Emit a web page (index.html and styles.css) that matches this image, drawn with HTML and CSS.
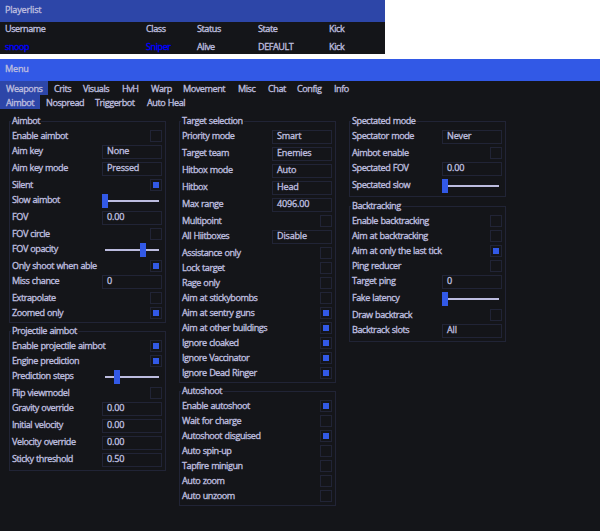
FILE: index.html
```
<!DOCTYPE html>
<html lang="en">
<head>
<meta charset="utf-8">
<title>Menu</title>
<link rel="stylesheet" href="styles.css">
</head>
<body>
<section class="players">
  <header class="titlebar muted">Playerlist</header>
  <div class="player-row"><span>Username</span><span>Class</span><span>Status</span><span>State</span><span>Kick</span></div>
  <div class="player-row"><span class="team">snoop</span><span class="team">Sniper</span><span>Alive</span><span>DEFAULT</span><span>Kick</span></div>
</section>
<main class="menu">
  <header class="titlebar">Menu</header>
  <nav class="tabs main-tabs"><span class="active">Weapons</span><span>Crits</span><span>Visuals</span><span>HvH</span><span>Warp</span><span>Movement</span><span>Misc</span><span>Chat</span><span>Config</span><span>Info</span></nav>
  <nav class="tabs sub-tabs"><span class="active">Aimbot</span><span>Nospread</span><span>Triggerbot</span><span>Auto Heal</span></nav>
  <div class="columns" id="columns"></div>
</main>
<script src="menu.js"></script>
</body>
</html>
```
FILE: styles.css
```
* { box-sizing: border-box; }
body {
  margin: 0;
  width: 600px;
  height: 531px;
  overflow: hidden;
  background: #fff;
  color: #bcbcdf;
  font: 500 9.1px/12px "Open Sans", "Noto Sans", sans-serif;
  letter-spacing: -0.44px;
  word-spacing: 0.5px;
  -webkit-text-stroke: 0.35px currentColor;
  white-space: nowrap;
}
.players { width: 385px; height: 54px; background: #141519; }
.titlebar { height: 22px; padding: 4px 5px; background: #3259e6; letter-spacing: -0.2px; }
.titlebar.muted { background: #2d46a8; }
.player-row {
  display: grid;
  grid-template-columns: 141px 51px 61px 71px 1fr;
  height: 18px;
  padding: 1px 0 0 5px;
}
.team { color: #0000ff; }
.menu { height: 472px; margin-top: 5px; background: #141519; }
.tabs { display: grid; height: 14px; }
.main-tabs { grid-template-columns: 48px 29px 39px 29px 32px 55px 30px 29px 37px 28px; }
.sub-tabs { grid-template-columns: 40px 49px 52px 50px; }
.tabs span { padding: 2px 0 0 6px; }
.tabs .active { background: #2d46a8; }
.columns {
  display: grid;
  grid-template-columns: repeat(3, 157px);
  gap: 13px;
  align-items: start;
  padding: 12px 9px 0;
}
.column { display: grid; gap: 8px; }
.column:last-child { gap: 9px; }
.group {
  display: grid;
  gap: 3px;
  padding: 0 3px 3px 2px;
  border: 1px solid #212436;
}
.legend {
  justify-self: start;
  height: 12px;
  margin: -7px 0 0 -1px;
  padding: 0 1px;
  background: #141519;
}
.row { display: flex; justify-content: space-between; }
.label { height: 12px; }
.check { width: 12px; height: 12px; padding: 2px; border: 1px solid #212436; }
.check.on::before { content: ""; display: block; width: 6px; height: 6px; background: #3259e6; }
.field { width: 60px; height: 14px; padding-left: 4px; border: 1px solid #212436; line-height: 10px; letter-spacing: -0.2px; }
.slider { display: flex; align-items: center; width: 60px; height: 14px; padding: 0 3px; }
.track { width: 54px; height: 2px; background: #bcbcdf; }
.thumb { width: 6px; height: 14px; margin: -6px 0 0 -3px; background: #3259e6; }
```
FILE: menu.js
```
// Each option is [label, value]; booleans are checkboxes, numbers are slider positions, strings are fields.
const columns = [
  [
    ["Aimbot", [["Enable aimbot", false], ["Aim key", "None"], ["Aim key mode", "Pressed"], ["Silent", true], ["Slow aimbot", 0], ["FOV", "0.00"], ["FOV circle", false], ["FOV opacity", 38], ["Only shoot when able", true], ["Miss chance", "0"], ["Extrapolate", false], ["Zoomed only", true]]],
    ["Projectile aimbot", [["Enable projectile aimbot", true], ["Engine prediction", true], ["Prediction steps", 12], ["Flip viewmodel", false], ["Gravity override", "0.00"], ["Initial velocity", "0.00"], ["Velocity override", "0.00"], ["Sticky threshold", "0.50"]]]
  ],
  [
    ["Target selection", [["Priority mode", "Smart"], ["Target team", "Enemies"], ["Hitbox mode", "Auto"], ["Hitbox", "Head"], ["Max range", "4096.00"], ["Multipoint", false], ["All Hiitboxes", "Disable"], ["Assistance only", false], ["Lock target", false], ["Rage only", false], ["Aim at stickybombs", false], ["Aim at sentry guns", true], ["Aim at other buildings", true], ["Ignore cloaked", true], ["Ignore Vaccinator", true], ["Ignore Dead Ringer", true]]],
    ["Autoshoot", [["Enable autoshoot", true], ["Wait for charge", false], ["Autoshoot disguised", true], ["Auto spin-up", false], ["Tapfire minigun", false], ["Auto zoom", false], ["Auto unzoom", false]]]
  ],
  [
    ["Spectated mode", [["Spectator mode", "Never"], ["Aimbot enable", false], ["Spectated FOV", "0.00"], ["Spectated slow", 0]]],
    ["Backtracking", [["Enable backtracking", false], ["Aim at backtracking", false], ["Aim at only the last tick", true], ["Ping reducer", false], ["Target ping", "0"], ["Fake latency", 0], ["Draw backtrack", false], ["Backtrack slots", "All"]]]
  ]
];

function control(value) {
  if (typeof value === "boolean") return `<span class="check${value ? " on" : ""}"></span>`;
  if (typeof value === "number") return `<div class="slider"><div class="track"><div class="thumb" style="transform: translateX(${value}px)"></div></div></div>`;
  return `<span class="field">${value}</span>`;
}

document.getElementById("columns").innerHTML = columns.map(groups =>
  `<div class="column">${groups.map(([name, options]) =>
    `<section class="group"><span class="legend">${name}</span>${options.map(([label, value]) =>
      `<div class="row"><span class="label">${label}</span>${control(value)}</div>`).join("")}</section>`).join("")}</div>`).join("");
```
